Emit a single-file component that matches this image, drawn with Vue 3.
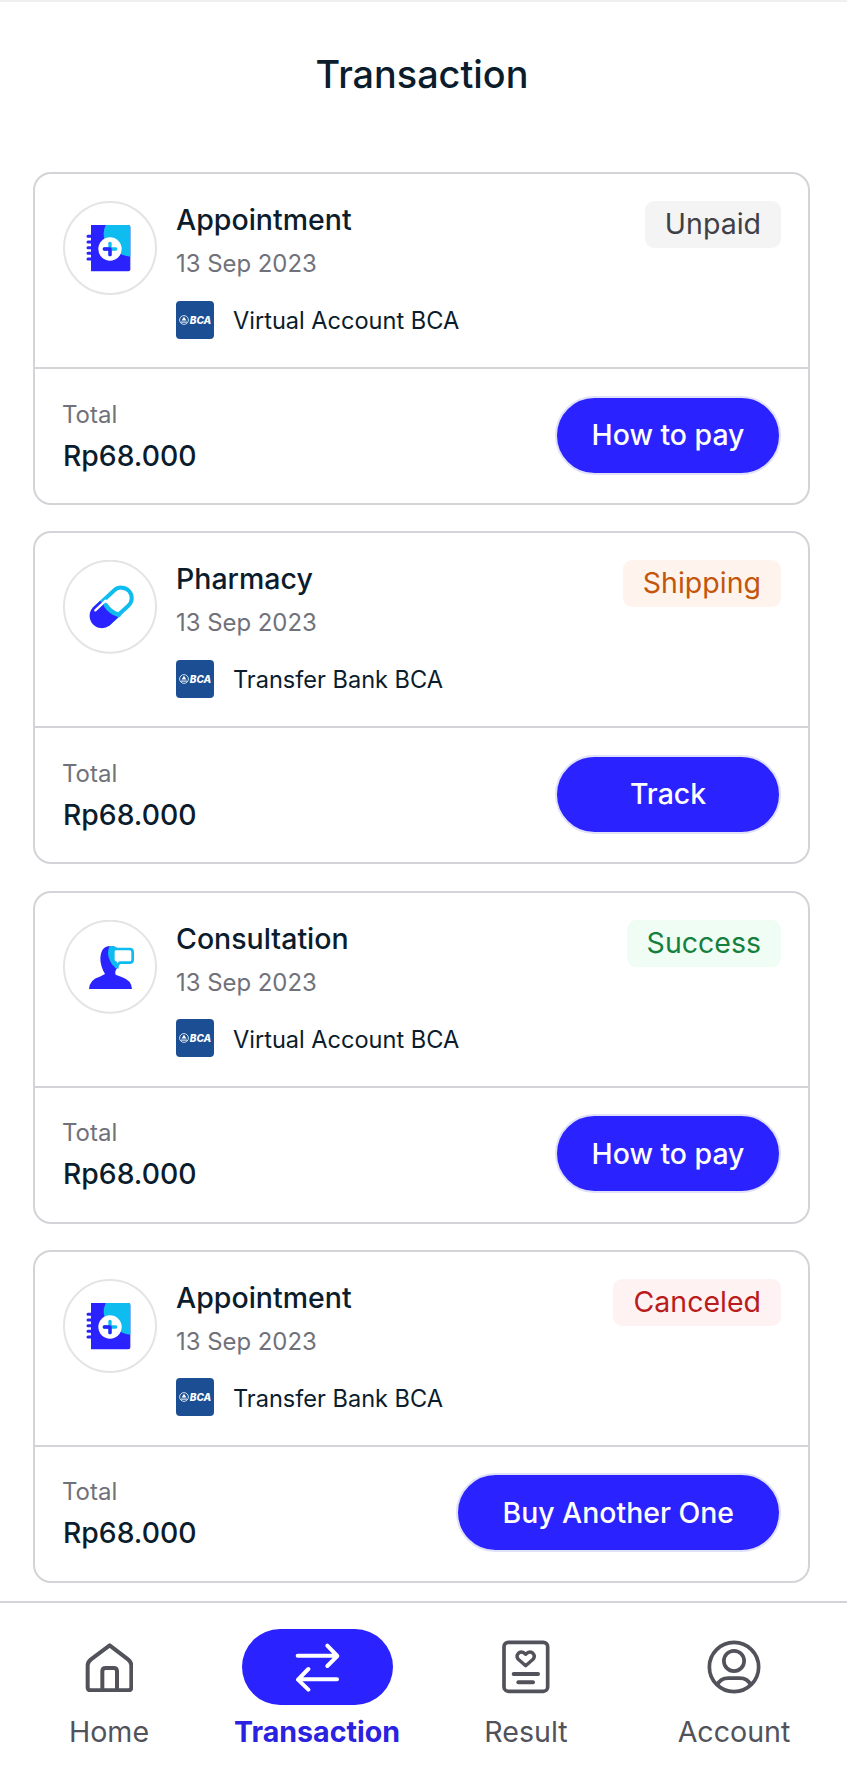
<template>
  <div class="page">
    <header class="title-bar">
      <h1>Transaction</h1>
    </header>

    <main class="list">
      <section v-for="(item, i) in transactions" :key="i" class="card">
        <div class="card-top">
          <svg v-if="item.icon === 'book'" class="type-icon" viewBox="38 33 282 282">
            <circle cx="179" cy="174" r="138" fill="#fff" stroke="#e4e4e7" stroke-width="6" />
            <path d="M122 105H234Q240 105 240 111V238Q240 244 234 244H122Z" fill="#2a22ff" />
            <path d="M166 105H234Q240 105 240 111V200Q205 195 175 170Q150 140 166 105Z" fill="#0fbcf0" />
            <path d="M113 139H124M113 156H124M113 173H124M113 190H124M113 207H124" stroke="#2a22ff" stroke-width="9" stroke-linecap="round" />
            <circle cx="179" cy="177" r="35" fill="#fff" />
            <path d="M179 160V194" stroke="#0fbcf0" stroke-width="10" stroke-linecap="round" />
            <path d="M162 177H196" stroke="#0fbcf0" stroke-width="10" stroke-linecap="round" />
            <path d="M162 177H179M179 177V194" stroke="#2a22ff" stroke-width="10" stroke-linecap="round" />
          </svg>
          <svg v-else-if="item.icon === 'pill'" class="type-icon" viewBox="38 33 282 282">
            <circle cx="179" cy="173" r="138" fill="#fff" stroke="#e4e4e7" stroke-width="6" />
            <path d="M131 180L192 124A31 31 0 0 1 234 170L173 226" fill="none" stroke="#0fbcf0" stroke-width="12" />
            <path d="M149 156L127 176A37 37 0 0 0 177 230L207 202Q185 195 165 170Z" fill="#2a22ff" />
            <path d="M135 184L166 155" stroke="#fff" stroke-width="7" stroke-linecap="round" />
            <path d="M166 168Q180 190 205 198" fill="none" stroke="#0fbcf0" stroke-width="13" stroke-linecap="round" />
          </svg>
          <svg v-else class="type-icon" viewBox="38 30 282 282">
            <circle cx="179" cy="170" r="138" fill="#fff" stroke="#e4e4e7" stroke-width="6" />
            <path d="M116 237Q118 208 148 200L164 192Q150 170 150 145Q152 108 180 108Q200 108 208 125L200 175Q192 186 196 194L214 201Q243 210 245 237Z" fill="#2a22ff" />
            <path d="M178 108Q195 106 205 118L205 176Q190 172 182 158Q166 132 178 108Z" fill="#0fbcf0" />
            <path d="M196 117H238Q247 117 247 126V149Q247 158 238 158H208L197 171L197 158Q189 157 189 149V126Q189 117 196 117Z" fill="#fff" stroke="#0fbcf0" stroke-width="8" stroke-linejoin="round" />
          </svg>

          <div class="info">
            <div class="name">{{ item.name }}</div>
            <div class="date">13 Sep 2023</div>
            <div class="payment">
              <span class="bca">
                <svg class="bca-mark" viewBox="0 0 10 10">
                  <circle cx="5" cy="5" r="4.4" fill="none" stroke="#fff" stroke-width="0.8" />
                  <path d="M5 1.8L7.4 5.6H2.6Z" fill="#fff" />
                  <path d="M2 6.6H8V7.6H2Z" fill="#fff" />
                </svg>
                <span class="bca-text">BCA</span>
              </span>
              <span class="method">{{ item.method }}</span>
            </div>
          </div>

          <span class="badge" :class="item.status.toLowerCase()">{{ item.status }}</span>
        </div>

        <div class="card-bottom">
          <div class="total">
            <div class="total-label">Total</div>
            <div class="total-value">Rp68.000</div>
          </div>
          <button class="action" :class="{ wide: item.action.length > 10 }">{{ item.action }}</button>
        </div>
      </section>
    </main>

    <nav class="bottom-nav">
      <a class="nav-item">
        <span class="nav-icon">
          <svg width="48" height="50" viewBox="256 180 144 150" fill="none" stroke="#52525b" stroke-width="12" stroke-linejoin="round">
            <path d="M330 190L385 232Q395 240 395 250V316Q395 325 386 325H273Q264 325 264 316V250Q264 240 274 232Z" />
            <path d="M308 322V268Q308 258 318 258H342Q352 258 352 268V322" />
          </svg>
        </span>
        <span class="nav-label">Home</span>
      </a>
      <a class="nav-item active">
        <span class="nav-icon pill">
          <svg width="48" height="50" viewBox="880 183 144 150" fill="none" stroke="#fff" stroke-width="12" stroke-linecap="round" stroke-linejoin="round">
            <path d="M894 224H1010M983 194L1013 225L983 255" />
            <path d="M1012 295H896M926 264L895 296L926 326" />
          </svg>
        </span>
        <span class="nav-label">Transaction</span>
      </a>
      <a class="nav-item">
        <span class="nav-icon">
          <svg width="48" height="54" viewBox="234 180 144 160" fill="none" stroke="#52525b" stroke-linecap="round" stroke-linejoin="round">
            <rect x="240" y="186" width="131" height="147" rx="13" stroke-width="11" />
            <path d="M305 256L282 236Q275 226 284 218Q295 211 305 222Q315 211 326 218Q335 226 328 236Z" stroke-width="10" />
            <path d="M269 281H342" stroke-width="12" />
            <path d="M283 306H327" stroke-width="12" />
          </svg>
        </span>
        <span class="nav-label">Result</span>
      </a>
      <a class="nav-item">
        <span class="nav-icon">
          <svg width="54" height="54" viewBox="849 179 160 160" fill="none" stroke="#52525b" stroke-width="11">
            <circle cx="929" cy="259" r="73" />
            <circle cx="929" cy="241" r="30" />
            <path d="M880 312Q888 292 912 292H946Q970 292 978 312" />
          </svg>
        </span>
        <span class="nav-label">Account</span>
      </a>
    </nav>
  </div>
</template>

<script setup>
const transactions = [
  { name: 'Appointment', icon: 'book', method: 'Virtual Account BCA', status: 'Unpaid', action: 'How to pay' },
  { name: 'Pharmacy', icon: 'pill', method: 'Transfer Bank BCA', status: 'Shipping', action: 'Track' },
  { name: 'Consultation', icon: 'chat', method: 'Virtual Account BCA', status: 'Success', action: 'How to pay' },
  { name: 'Appointment', icon: 'book', method: 'Transfer Bank BCA', status: 'Canceled', action: 'Buy Another One' }
]
</script>

<style>
html,
body {
  margin: 0;
  background: #fff;
}
</style>

<style scoped>
.page {
  width: 847px;
  height: 1785px;
  overflow: hidden;
  box-sizing: border-box;
  border-top: 2px solid #f0f0f1;
  font-family: "Inter", sans-serif;
  color: #0b1c2c;
  background: #fff;
}

.title-bar {
  height: 170px;
  padding: 50px 3px 0 0;
  box-sizing: border-box;
  text-align: center;
}

.title-bar h1 {
  margin: 0;
  font-size: 37.8px;
  line-height: 44px;
  font-weight: 500;
}

.list {
  display: flex;
  flex-direction: column;
  gap: 26.3px;
  width: 777px;
  margin-left: 33px;
}

.card {
  box-sizing: border-box;
  height: 333px;
  border: 2px solid #d4d4d8;
  border-radius: 18px;
}

.card-top {
  display: flex;
  align-items: flex-start;
  box-sizing: border-box;
  height: 195px;
  padding: 27px 28px 0 28px;
  border-bottom: 2px solid #d4d4d8;
}

.type-icon {
  flex: none;
  width: 94px;
  height: 94px;
}

.info {
  flex: 1;
  margin-left: 19px;
  padding-top: 1px;
}

.name {
  font-size: 28.5px;
  line-height: 36px;
  font-weight: 500;
}

.date {
  margin-top: 8px;
  font-size: 23.9px;
  line-height: 36px;
  color: #71717a;
}

.payment {
  display: flex;
  align-items: center;
  gap: 19px;
  margin-top: 18px;
}

.bca {
  display: flex;
  align-items: center;
  justify-content: center;
  gap: 1px;
  width: 38px;
  height: 38px;
  border-radius: 4px;
  background: #1c4e94;
}

.bca-mark {
  width: 10px;
  height: 10px;
}

.bca-text {
  font-size: 10px;
  font-weight: 800;
  font-style: italic;
  color: #fff;
}

.method {
  padding-top: 3px;
  font-size: 23.55px;
  line-height: 36px;
}

.badge {
  box-sizing: border-box;
  height: 47px;
  padding: 0 20px;
  margin-right: -1px;
  border-radius: 9px;
  font-size: 28.5px;
  line-height: 46px;
}

.unpaid {
  background: #f4f4f5;
  color: #3f3f46;
}

.shipping {
  background: #fff4ed;
  color: #c2560c;
}

.success {
  background: #f0fdf4;
  color: #15803d;
}

.canceled {
  background: #fef2f2;
  color: #b91c1c;
}

.card-bottom {
  display: flex;
  align-items: center;
  justify-content: space-between;
  height: 134px;
  padding: 0 27px 0 27px;
}

.total {
  padding-top: 1px;
}

.total-label {
  font-size: 24px;
  line-height: 30px;
  color: #71717a;
}

.total-value {
  margin: 8px 0 0 1px;
  font-size: 28.3px;
  line-height: 36px;
  font-weight: 500;
}

.action {
  box-sizing: border-box;
  height: 79px;
  min-width: 226px;
  padding: 0 34px 1px;
  margin-bottom: 2px;
  border: 2px solid #e0e0f8;
  border-radius: 40px;
  background: #2a22ff;
  color: #fff;
  font-family: inherit;
  font-size: 28.4px;
  font-weight: 500;
}

.action.wide {
  padding-left: 45px;
  padding-right: 45px;
}

.bottom-nav {
  display: grid;
  grid-template-columns: 218px 198px 220px 196px;
  margin-top: 18px;
  padding-top: 26px;
  border-top: 2px solid #d4d4d8;
}

.nav-item {
  display: flex;
  flex-direction: column;
  align-items: center;
}

.nav-icon {
  display: flex;
  align-items: center;
  justify-content: center;
  width: 151px;
  height: 76px;
  border-radius: 38px;
}

.nav-icon.pill {
  background: #2a22ff;
}

.nav-label {
  margin-top: 9px;
  font-size: 28.6px;
  line-height: 36px;
  white-space: nowrap;
  color: #52525b;
}

.active .nav-label {
  font-weight: 700;
  color: #2a22e0;
}
</style>
